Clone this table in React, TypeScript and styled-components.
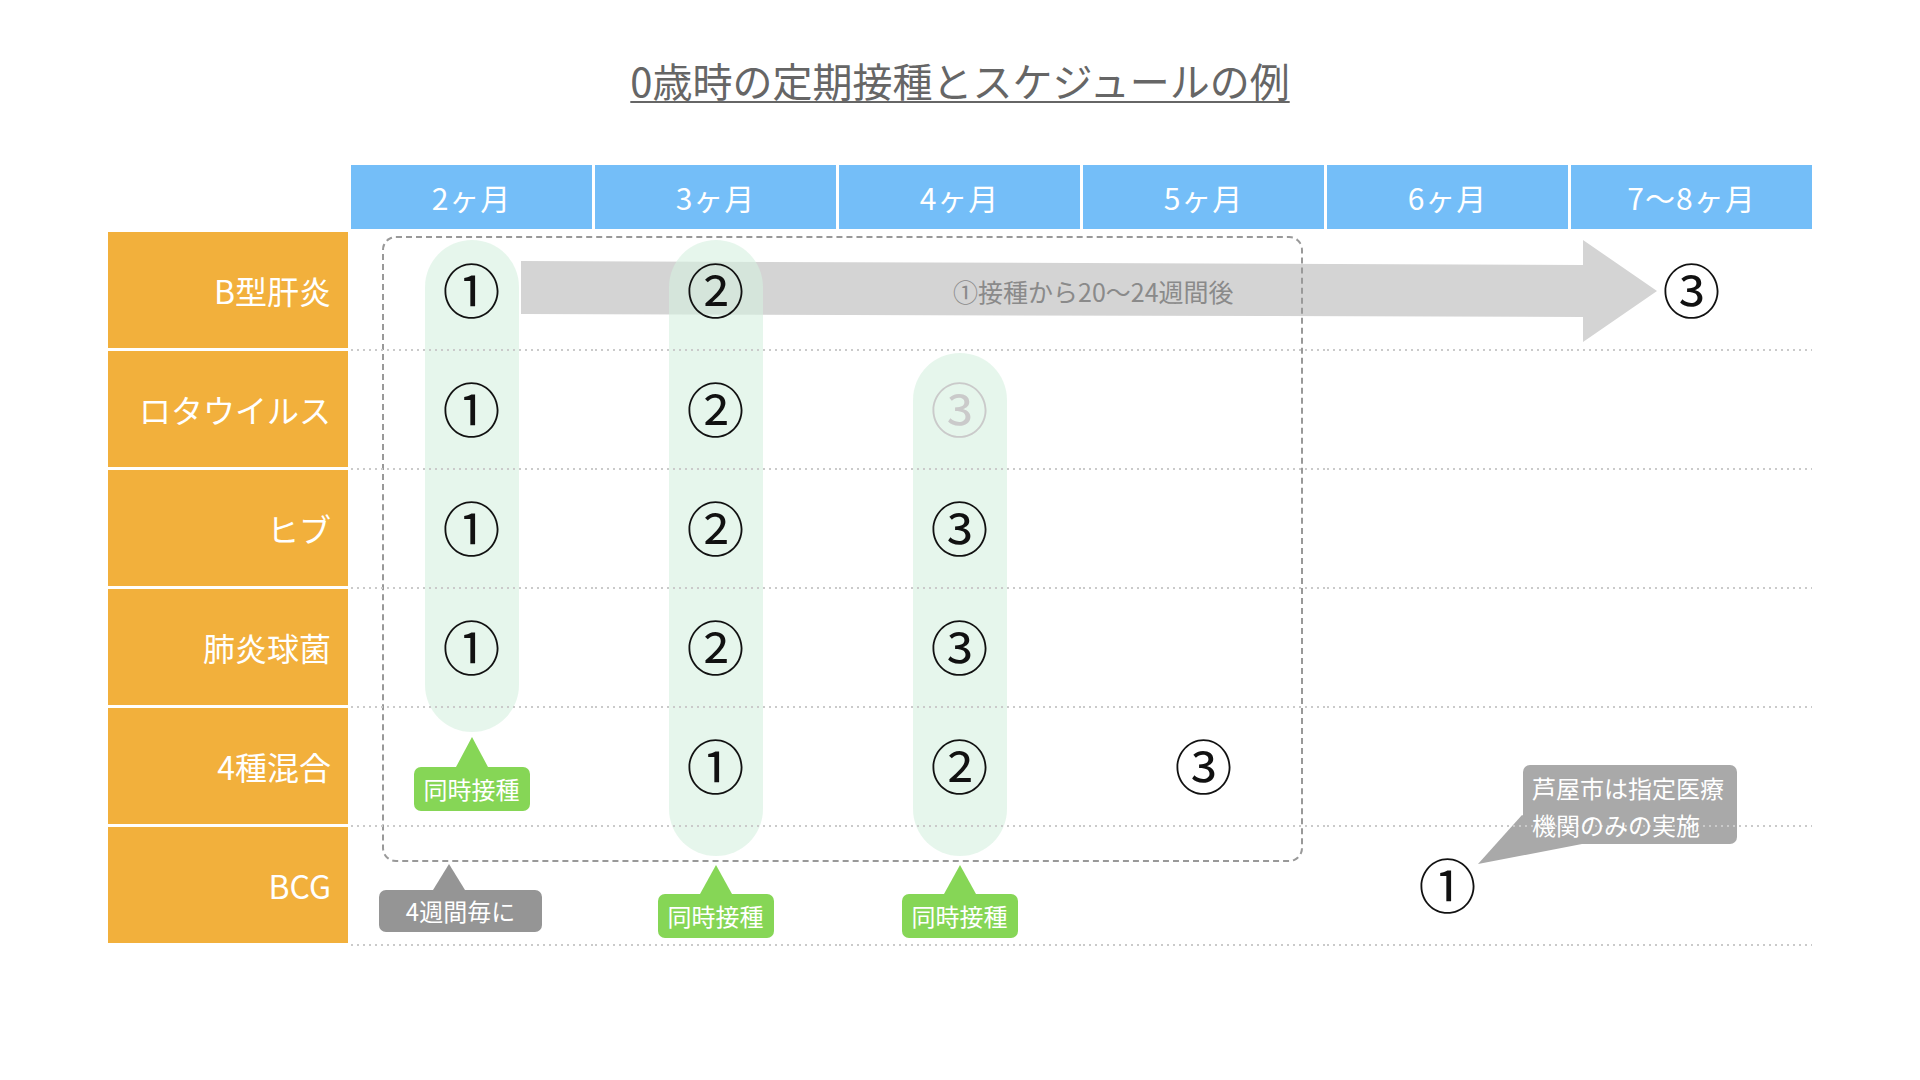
import React from 'react';
import styled, { createGlobalStyle } from 'styled-components';

const GlobalStyle = createGlobalStyle`
  html, body {
    margin: 0;
    padding: 0;
    background: #fff;
  }
  body {
    font-family: "Noto Sans CJK JP", "Noto Sans", sans-serif;
  }
`;

// shared track sizes for the table and the overlay layer
const COLUMNS = '240px repeat(6, 241px)';
const ROWS = '64px repeat(6, 116px)';
const GAP = 3;

const GREEN = '#86d656';
const GREY = '#959595';

const months = ['2ヶ月', '3ヶ月', '4ヶ月', '5ヶ月', '6ヶ月', '7〜8ヶ月'];

type Mark = { text: string; faded?: boolean } | null;

const rows: { label: string; marks: Mark[] }[] = [
  { label: 'B型肝炎', marks: [{ text: '①' }, { text: '②' }, null, null, null, { text: '③' }] },
  { label: 'ロタウイルス', marks: [{ text: '①' }, { text: '②' }, { text: '③', faded: true }, null, null, null] },
  { label: 'ヒブ', marks: [{ text: '①' }, { text: '②' }, { text: '③' }, null, null, null] },
  { label: '肺炎球菌', marks: [{ text: '①' }, { text: '②' }, { text: '③' }, null, null, null] },
  { label: '4種混合', marks: [null, { text: '①' }, { text: '②' }, { text: '③' }, null, null] },
  { label: 'BCG', marks: [null, null, null, null, { text: '①' }, null] },
];

const Page = styled.div`
  width: 1920px;
  height: 1080px;
  overflow: hidden;
  background: #fff;
`;

const Title = styled.h1`
  margin: 0;
  padding-top: 60px;
  text-align: center;
  font-size: 40px;
  line-height: 40px;
  font-weight: 400;
  color: #666;
  text-decoration: underline;
  text-decoration-thickness: 2px;
  text-underline-offset: 4px;
`;

const Schedule = styled.div`
  position: relative;
  isolation: isolate;
  margin: 65px 0 0 108px;
  width: 1704px;
  display: grid;
  grid-template-columns: ${COLUMNS};
  grid-template-rows: ${ROWS};
  gap: ${GAP}px;
`;

const Corner = styled.div``;

const HeadCell = styled.div`
  background: #74bef8;
  color: #fff;
  font-size: 30px;
  display: flex;
  align-items: center;
  justify-content: center;
  letter-spacing: 1px;
`;

const Label = styled.div`
  background: #f2b03c;
  color: #fff;
  font-size: 32px;
  display: flex;
  align-items: center;
  justify-content: flex-end;
  padding-right: 17px;
`;

const Cell = styled.div<{ $last?: boolean }>`
  position: relative;
  display: flex;
  align-items: center;
  justify-content: center;

  /* dotted row rule, runs on through the column gaps */
  &::after {
    content: '';
    position: absolute;
    left: 0;
    right: ${(p) => (p.$last ? '0' : `-${GAP}px`)};
    bottom: -3px;
    height: 2px;
    z-index: 5;
    background-image: linear-gradient(to right, #cacaca 2px, transparent 2px);
    background-size: 6px 2px;
  }
`;

const Num = styled.span<{ $faded?: boolean }>`
  position: relative;
  z-index: 3;
  margin-bottom: 5px;
  font-size: 58px;
  line-height: 1;
  color: ${(p) => (p.$faded ? '#cacaca' : '#111')};
`;

/* layer of drawings over the table, on the same tracks */
const Overlay = styled.div`
  position: absolute;
  inset: 0;
  display: grid;
  grid-template-columns: ${COLUMNS};
  grid-template-rows: ${ROWS};
  gap: ${GAP}px;
  pointer-events: none;
`;

const Pill = styled.div<{ $col: number; $rows: string; $top: number; $bottom: number }>`
  z-index: 2;
  grid-column: ${(p) => p.$col};
  grid-row: ${(p) => p.$rows};
  justify-self: center;
  width: 94px;
  margin: ${(p) => p.$top}px 0 ${(p) => -p.$bottom}px;
  border-radius: 47px;
  background: rgba(214, 240, 224, 0.6);
`;

const Frame = styled.div`
  z-index: 2;
  grid-column: 2 / 6;
  grid-row: 2 / 8;
  margin: 4px 21px 81px 31px;
  border: 2px dashed #999;
  border-radius: 14px;
`;

const Arrow = styled.div`
  z-index: 1;
  grid-column: 2 / 8;
  grid-row: 2;
  align-self: start;
  justify-self: start;
  margin: 8px 0 0 170px;
  display: grid;

  & > * {
    grid-area: 1 / 1;
  }
  svg {
    display: block;
  }
`;

const ArrowLabel = styled.span`
  align-self: center;
  padding-left: 432px;
  font-size: 25px;
  color: #8a8a8a;
  white-space: nowrap;
`;

const Callout = styled.div<{ $col: number; $row: number; $top: number; $left?: number }>`
  z-index: 4;
  grid-column: ${(p) => p.$col};
  grid-row: ${(p) => p.$row};
  align-self: start;
  justify-self: ${(p) => (p.$left === undefined ? 'center' : 'start')};
  margin: ${(p) => p.$top}px 0 0 ${(p) => p.$left ?? 0}px;
  display: flex;
  flex-direction: column;
  align-items: ${(p) => (p.$left === undefined ? 'center' : 'flex-start')};
`;

const Pointer = styled.div<{ $color: string; $inset?: number; $h?: number }>`
  width: 0;
  height: 0;
  margin-left: ${(p) => p.$inset ?? 0}px;
  border-left: 16px solid transparent;
  border-right: 16px solid transparent;
  border-bottom: ${(p) => p.$h ?? 30}px solid ${(p) => p.$color};
`;

const Tag = styled.div<{ $color: string; $width?: number; $h?: number }>`
  box-sizing: border-box;
  width: ${(p) => (p.$width ? `${p.$width}px` : 'auto')};
  height: ${(p) => p.$h ?? 44}px;
  padding: 0 10px;
  border-radius: 7px;
  background: ${(p) => p.$color};
  color: #fff;
  font-size: 24px;
  line-height: ${(p) => p.$h ?? 44}px;
  text-align: center;
  white-space: nowrap;
`;

const Note = styled.div`
  position: relative;
  grid-column: 6 / 8;
  grid-row: 6;
  align-self: start;
  justify-self: start;
  margin: 57px 0 0 196px;
  width: 214px;
  height: 79px;
  box-sizing: border-box;
  padding: 4px 10px 0 9px;
  border-radius: 7px;
  background: #a9a9a9;

  svg {
    position: absolute;
    left: -45px;
    top: 50px;
  }
`;

const NoteText = styled.span`
  position: relative;
  z-index: 6;
  display: block;
  color: #fff;
  font-size: 24px;
  line-height: 37px;
  white-space: nowrap;
`;

export default function App() {
  return (
    <Page>
      <GlobalStyle />
      <Title>0歳時の定期接種とスケジュールの例</Title>
      <Schedule>
        <Corner />
        {months.map((m) => (
          <HeadCell key={m}>{m}</HeadCell>
        ))}
        {rows.map((r) => (
          <React.Fragment key={r.label}>
            <Label>{r.label}</Label>
            {r.marks.map((mk, i) => (
              <Cell key={i} $last={i === r.marks.length - 1}>
                {mk && <Num $faded={mk.faded}>{mk.text}</Num>}
              </Cell>
            ))}
          </React.Fragment>
        ))}

        <Overlay>
          <Arrow>
            <svg width="1136" height="102" viewBox="0 0 1136 102">
              <polygon points="0,21 1062,25 1062,0 1136,51 1062,102 1062,77 0,74" fill="#d4d4d4" />
            </svg>
            <ArrowLabel>①接種から20〜24週間後</ArrowLabel>
          </Arrow>

          <Pill $col={2} $rows="2 / 6" $top={8} $bottom={27} />
          <Pill $col={3} $rows="2 / 7" $top={8} $bottom={32} />
          <Pill $col={4} $rows="3 / 7" $top={2} $bottom={32} />
          <Frame />

          <Callout $col={2} $row={6} $top={29}>
            <Pointer $color={GREEN} />
            <Tag $color={GREEN}>同時接種</Tag>
          </Callout>
          <Callout $col={2} $row={7} $top={37} $left={28}>
            <Pointer $color={GREY} $inset={54} $h={26} />
            <Tag $color={GREY} $width={163} $h={42}>4週間毎に</Tag>
          </Callout>
          <Callout $col={3} $row={7} $top={38}>
            <Pointer $color={GREEN} $h={29} />
            <Tag $color={GREEN}>同時接種</Tag>
          </Callout>
          <Callout $col={4} $row={7} $top={38}>
            <Pointer $color={GREEN} $h={29} />
            <Tag $color={GREEN}>同時接種</Tag>
          </Callout>

          <Note>
            <NoteText>芦屋市は指定医療</NoteText>
            <NoteText>機関のみの実施</NoteText>
            <svg width="104" height="50" viewBox="0 0 104 50">
              <polygon points="44,0 104,29 0,49" fill="#a9a9a9" />
            </svg>
          </Note>
        </Overlay>
      </Schedule>
    </Page>
  );
}
